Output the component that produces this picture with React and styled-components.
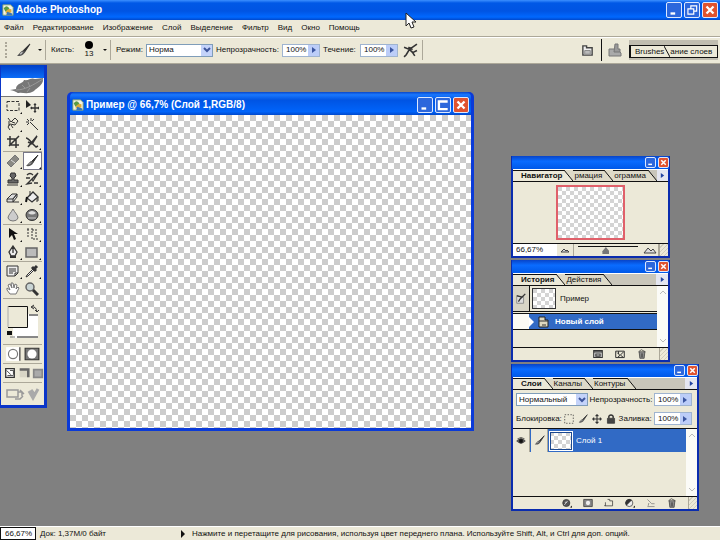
import React from "react";
import styled, { createGlobalStyle } from "styled-components";

const Icon = ({ size = 14, children }) => (
  <Svg viewBox="0 0 14 14" width={size} height={size} aria-hidden="true">
    {children}
  </Svg>
);

const Brush = ({ size }) => (
  <Icon size={size}>
    <path d="M13 1 L7 7 L8 8.500 Z" fill="#333" stroke="#333" />
    <path d="M7 7 C5 7 4 9 1 12 C4 12.500 7 12 8.500 8.500 Z" fill="#555" />
    <path d="M6 8.500 L4 10.500" stroke="#ccc" />
  </Icon>
);

const DocIcon = () => (
  <Icon size={12}>
    <path d="M1 1 H10 L13 4 V13 H1 Z" fill="#f4f4e4" stroke="#7a9a68" />
    <path d="M2 5 Q6 0 9 6 L4 9 Z" fill="#5b9b44" />
    <path d="M4 11 Q5 5 11 6 L11 10 Z" fill="#e0ac35" />
    <path d="M6 9 L12 11 V13 H5 Z" fill="#3a76b8" />
  </Icon>
);

const icons = {
  marquee: <path d="M1 2.500 H13 V11.500 H1 Z" strokeDasharray="3 1.500" />,
  move: (
    <>
      <path d="M1 1 V9 L6 6 Z" fill="#222" stroke="none" />
      <path d="M10 5 V13 M6 9 H14 M9 6 L10 5 L11 6 M9 12 L10 13 L11 12 M7 8 L6 9 L7 10 M13 8 L14 9 L13 10" strokeWidth="1.300" />
    </>
  ),
  lasso: <path d="M2 1 L5 5 L9 1 L12 4 L9 8 L4 7 L2 10 L4 13 M3 4 V9 M6 5 L9 6 M5 8 L7 11" />,
  wand: <path d="M5 5 L13 13 M6 1 V4 M1 5 H4 M2 2 L4 4 M9 2 L7 4 M2 8 L4 6" />,
  crop: <path d="M4 1 V10 H13 M1 4 H10 V13 M3 11 L13 1" strokeWidth="1.500" />,
  slice: <path d="M1 3 C4 3 6 8 11 12 L13 11 M3 12 L12 1 L7 9 M3 7 L7 9" strokeWidth="1.500" />,
  heal: (
    <>
      <path d="M1 9 L9 1 L13 5 L5 13 Z" fill="#8a8a84" stroke="#777" />
      <path d="M5 6 L9 9" stroke="#ddd" />
    </>
  ),
  stamp: (
    <>
      <path d="M5 1 H9 L10 4 L8 6 V8 H12 V11 H2 V8 H6 V6 L4 4 Z" fill="#666" />
      <path d="M1 13 H12" />
    </>
  ),
  history: <path d="M13 1 L7 7 L8 9 Z M7 7 L2 12 L7 11 M2 3 Q5 0 8 3 M1 6 H5 M9 11 H13" strokeWidth="1.300" />,
  eraser: (
    <>
      <path d="M1 9 L6 4 H11 L7 9 V12 H1 Z M1 9 H7 L11 4 V7 L7 12" fill="#ddd" />
      <path d="M7 12 H13" />
    </>
  ),
  bucket: (
    <>
      <path d="M2 8 L8 2 L13 7 L7 12 Z" fill="#eee" strokeWidth="1.300" />
      <path d="M5 1 V6 M13 7 V11 M12 8 V12" />
      <path d="M2 7 L1 12" stroke="#111" strokeWidth="2" />
    </>
  ),
  blur: <path d="M7 1 C5 5 2 7 2 10 Q3 13 7 13 Q11 13 12 10 C12 7 9 5 7 1 Z" fill="#ccc" stroke="#777" />,
  sponge: (
    <>
      <ellipse cx="7" cy="7" rx="6" ry="5.500" fill="#777" />
      <path d="M3 5 Q7 1 11 5 Q7 8 3 5 Z" fill="#ddd" stroke="none" />
      <path d="M3 10 H11" stroke="#ccc" />
    </>
  ),
  select: <path d="M3 1 V11 L6 8 L8 13 L10 12 L8 7 H12 Z" fill="#111" stroke="none" />,
  type: <path d="M2 2 H5 M3 2 V10 M7 1 V12 M7 3 H12 M11 5 V11 M8 12 H13" strokeDasharray="2 1" />,
  pen: (
    <>
      <path d="M7 1 L11 7 L9 11 H5 L3 7 Z M7 1 V8" fill="#eee" strokeWidth="1.300" />
      <path d="M4 12 H10" strokeWidth="2" />
    </>
  ),
  shape: <path d="M1 3 H12 V12 H1 Z" fill="#bbb" stroke="#666" strokeWidth="1.500" />,
  note: <path d="M1 2 H12 V9 L9 12 H1 Z M3 5 H10 M3 7 H10 M3 9 H7 M9 12 V9 H12" fill="#eee" />,
  dropper: (
    <>
      <path d="M8 5 L2 11 L1 13 L3 12 L9 6" fill="#eee" />
      <path d="M7 3 L11 7 M9 5 L12 2" strokeWidth="3" />
    </>
  ),
  hand: (
    <path d="M4 12 L1 8 V6 L4 8 L2 3 L4 2 L6 6 L5 1 H7 L8 6 L9 2 L11 3 L10 7 L12 5 L13 6 L10 12 Z" fill="#fff" stroke="#777" />
  ),
  zoom: (
    <>
      <circle cx="5" cy="5" r="4" fill="#c9d4d4" stroke="#666" strokeWidth="1.500" />
      <path d="M8 8 L13 13" strokeWidth="3" />
    </>
  ),
  lockDots: <path d="M1 1 H13 V13 H1 Z" strokeDasharray="2 2" />,
  lock: (
    <>
      <path d="M2 6 H12 V13 H2 Z" fill="#444" />
      <path d="M4 6 V3 Q7 0 10 3 V6" strokeWidth="2" />
    </>
  ),
  cross: <path d="M7 1 V13 M1 7 H13 M5 3 L7 1 L9 3 M5 11 L7 13 L9 11 M3 5 L1 7 L3 9 M11 5 L13 7 L11 9" strokeWidth="1.500" />,
  eye: (
    <>
      <path d="M1 7 Q7 1 13 7 Q7 13 1 7 Z" fill="#777" />
      <circle cx="7" cy="7" r="3" fill="#111" />
      <path d="M2 4 Q7 0 12 4" />
    </>
  ),
  file: (
    <>
      <path d="M2 2 H6 V4 H12 V12 H2 Z" fill="#eee" stroke="#444" strokeWidth="1.500" />
      <path d="M4 7 H10 V11 H4 Z" fill="#bbb" stroke="#888" />
    </>
  ),
  tray: (
    <>
      <path d="M1 6 H9 L13 10 V13 H1 Z" fill="#aaa" stroke="#777" />
      <path d="M7 1 H10 V6 H12 V9 H6 Z" fill="#999" stroke="#777" />
    </>
  ),
  airbrush: <path d="M13 1 L6 6 L1 4 M6 6 L9 9 L13 7 M9 9 L11 12 M6 6 L3 11 L1 13 M5 4 L9 6" strokeWidth="1.500" />,
  snapshot: (
    <>
      <path d="M1 2 H13 V12 H1 Z" fill="#ddd" strokeWidth="1.500" />
      <path d="M1 4 H13 M4 7 H10 V10 H4 Z" strokeWidth="1.500" />
    </>
  ),
  newDoc: <path d="M1 3 H13 V12 H1 Z M3 5 L7 9 L12 4 M7 9 L4 11 M8 9 L11 11 M5 3 V7" strokeWidth="1.400" />,
  trash: (
    <>
      <path d="M3 4 H11 L10 13 H4 Z" fill="#999" />
      <path d="M2 4 L6 1 L12 4 M6 6 V12 M8 6 V12" />
    </>
  ),
  fx: (
    <>
      <circle cx="6" cy="7" r="5" fill="#555" />
      <path d="M3 10 L8 4 M4 6 H7" stroke="#eee" />
      <path d="M12 13 H14 V11 Z" fill="#111" />
    </>
  ),
  mask: (
    <>
      <path d="M1 2 H13 V12 H1 Z" fill="#888" />
      <circle cx="7" cy="7" r="3" fill="#eee" stroke="none" />
    </>
  ),
  folder: <path d="M1 10 V11 H12 V4 H8 V2 H5 M2 11 V6" />,
  adjust: (
    <>
      <circle cx="6" cy="7" r="5" fill="#eee" />
      <path d="M9 3 A5 5 0 0 0 2 10 Z" fill="#333" />
      <path d="M12 13 H14 V11 Z" fill="#111" />
    </>
  ),
  page: <path d="M2 2 L8 8 M2 12 H12 M8 8 H12 M4 7 L3 11" stroke="#777" />,
  step: (
    <>
      <path d="M2 4 H10 V12 H2 Z" fill="#ddd" stroke="#888" />
      <path d="M12 1 L6 7 L4 10 M2 3 L9 5" strokeWidth="1.500" />
    </>
  ),
  maskOff: (
    <>
      <path d="M1 1 H13 V13 H1 Z" fill="#fff" stroke="none" />
      <circle cx="7" cy="7" r="4" fill="#fff" stroke="#777" />
      <path d="M13 1 V13" />
    </>
  ),
  maskOn: (
    <>
      <path d="M1 2 H13 V12 H1 Z" fill="#777" />
      <circle cx="7" cy="7" r="4" fill="#fff" stroke="none" />
    </>
  ),
  screen: (
    <>
      <path d="M2 2 H12 V12 H2 Z" fill="#fff" strokeWidth="1.500" />
      <path d="M3 4 L8 9 M4 10 H11 M7 4 H11 V9" />
    </>
  ),
  screenMenu: (
    <>
      <path d="M2 2 H12 V12 H2 Z" fill="#d8d5c6" stroke="none" />
      <path d="M2 3 H12 V12" stroke="#666" strokeWidth="3" />
    </>
  ),
  screenFull: <path d="M2 3 H12 V12 H2 Z" fill="#aaa" stroke="#888" strokeWidth="2" />,
};

const Glyph = ({ name, size }) =>
  name === "brush" ? (
    <Brush size={size} />
  ) : (
    <Icon size={size}>
      <g fill="none" stroke="#333">
        {icons[name]}
      </g>
    </Icon>
  );

const menus = [
  "Файл",
  "Редактирование",
  "Изображение",
  "Слой",
  "Выделение",
  "Фильтр",
  "Вид",
  "Окно",
  "Помощь",
];

const tools = [
  ["marquee", "move", "lasso", "wand", "crop", "slice"],
  ["heal", "brush", "stamp", "history", "eraser", "bucket", "blur", "sponge"],
  ["select", "type", "pen", "shape"],
  ["note", "dropper", "hand", "zoom"],
];

// tools without a flyout menu
const single = ["move", "wand", "crop", "hand", "zoom"];

const WindowButtons = ({ restore, small }) => (
  <Buttons>
    {!small && (
      <WinButton aria-label="Свернуть">
        <svg viewBox="0 0 12 12"><path d="M3 9 H7" stroke="#fff" strokeWidth="2" /></svg>
      </WinButton>
    )}
    <WinButton aria-label="Развернуть" $small={small}>
      <svg viewBox="0 0 12 12">
        {small ? (
          <path d="M3 8.500 H8" stroke="#fff" strokeWidth="2" />
        ) : restore ? (
          <path d="M5 5 V2.500 H10 V7 H8 M2.500 5 H7.500 V9.500 H2.500 Z" stroke="#fff" fill="none" />
        ) : (
          <path d="M10 9.500 H2.500 V3 H10" stroke="#fff" strokeWidth="2" fill="none" />
        )}
      </svg>
    </WinButton>
    <WinButton aria-label="Закрыть" $close $small={small}>
      <svg viewBox="0 0 12 12"><path d="M3 3 L9 9 M9 3 L3 9" stroke="#fff" strokeWidth="2" /></svg>
    </WinButton>
  </Buttons>
);

const Percent = ({ id }) => (
  <Field>
    <NumberInput id={id} defaultValue="100%" />
    <ArrowButton aria-label="Ползунок">
      <svg viewBox="0 0 6 6" width="6" height="6"><path d="M1 0 L5 3 L1 6 Z" fill="#3b55a0" /></svg>
    </ArrowButton>
  </Field>
);

const Dropdown = ({ id, label, value, width }) => (
  <SelectWrap $width={width}>
    <Select id={id} aria-label={label} defaultValue={value}>
      <option>{value}</option>
    </Select>
    <Chevron>
      <svg viewBox="0 0 8 6" width="8" height="6">
        <path d="M1 1 L4 4 L7 1" stroke="#3d559c" strokeWidth="2" fill="none" />
      </svg>
    </Chevron>
  </SelectWrap>
);

const PanelTabs = ({ items }) => (
  <Tabs role="tablist">
    {items.map((item, i) => (
      <React.Fragment key={item}>
        <Tab role="tab" aria-selected={i === 0} $active={i === 0}>
          {item}
        </Tab>
        <Slope viewBox="0 0 9 11" $last={i === items.length - 1}>
          <path d="M0 0 L9 11 H0 Z" fill={i === 0 ? "#ece9d8" : "#dedac8"} />
          <path d="M0 0 L9 11" stroke="#111" />
        </Slope>
      </React.Fragment>
    ))}
    <MenuArrow aria-label="Меню палитры">
      <svg viewBox="0 0 6 6" width="5" height="5"><path d="M1 0 L5 3 L1 6 Z" fill="#2243a0" /></svg>
    </MenuArrow>
  </Tabs>
);

const Palette = ({ tabs, width, height, children }) => (
  <Panel $width={width} $height={height}>
    <PanelTitle>
      <WindowButtons small />
    </PanelTitle>
    <PanelTabs items={tabs} />
    {children}
  </Panel>
);

const ScrollBar = () => (
  <Scroll>
    <svg viewBox="0 0 8 8" width="8" height="8"><path d="M1 5 L4 2 L7 5" stroke="#bbb" fill="none" /></svg>
    <svg viewBox="0 0 8 8" width="8" height="8"><path d="M1 3 L4 6 L7 3" stroke="#bbb" fill="none" /></svg>
  </Scroll>
);

const App = () => {
  return (
    <Page>
      <GlobalStyle />
      <TitleBar>
        <DocIcon />
        <Title>Adobe Photoshop</Title>
        <WindowButtons restore />
      </TitleBar>

      <MenuBar>
        {menus.map((menu) => (
          <MenuItem key={menu}>{menu}</MenuItem>
        ))}
      </MenuBar>

      <OptionsBar>
        <Group $width="46px">
          <Grip />
          <Brush size={15} />
          <SmallArrow />
        </Group>
        <Group $width="65px">
          <Caption>Кисть:</Caption>
          <BrushPreview>
            <BrushDot />
            13
          </BrushPreview>
          <SmallArrow />
        </Group>
        <Group $width="312px">
          <Label htmlFor="mode" $width="27px">Режим:</Label>
          <Dropdown id="mode" value="Норма" width="67px" />
          <Label htmlFor="opacity" $width="63px">Непрозрачность:</Label>
          <Percent id="opacity" />
          <Label htmlFor="flow" $width="34px">Течение:</Label>
          <Percent id="flow" />
          <Airbrush aria-label="Аэрограф">
            <Glyph name="airbrush" size={15} />
          </Airbrush>
        </Group>
        <Spacer />
        <IconSlot>
          <Glyph name="file" size={13} />
        </IconSlot>
        <IconSlot>
          <Glyph name="tray" size={14} />
        </IconSlot>
        <Well>
          <WellTabs>
            <span>Brushes</span>
            <svg viewBox="0 0 6 11" width="6" height="11"><path d="M0 0 L6 11" stroke="#111" /></svg>
            <span>ание слоев</span>
          </WellTabs>
        </Well>
      </OptionsBar>

      <Workspace>
        <Toolbox>
          <ToolTitle />
          <Banner>
            <svg viewBox="0 0 44 18" width="44" height="18">
              <path
                d="M9 12 L15 11 C15 5 22 6 23 2 C28 3 30 -1 34 1 L42 0 C43 7 36 10 33 13 C27 17 21 14 18 15 C15 15 16 13 9 12 Z"
                fill="#777"
              />
              <path d="M15 12 C24 12 32 7 42 1 M21 7 L24 10 M27 4 L29 9 M26 14 L29 10" stroke="#999" fill="none" />
            </svg>
          </Banner>
          {tools.map((group, i) => (
            <ToolGroup key={i}>
              {group.map((name) => (
                <Tool key={name} aria-label={name} $active={name === "brush"} $more={!single.includes(name)}>
                  <Glyph name={name} />
                </Tool>
              ))}
            </ToolGroup>
          ))}
          <Colors>
            <svg viewBox="0 0 40 38" width="40" height="38">
              <path d="M10 11 H35 V35 H10 Z" fill="#fff" />
              <path d="M26 12 H35 M14 34 H35" stroke="#111" />
              <path d="M5 3 H25 V24 H5 Z" fill="#ece9d8" />
              <path d="M5 3.500 H24.500 V24.500 H5" stroke="#111" fill="none" />
              <path d="M5 3 V24" stroke="#aaa" />
              <path d="M7 34 H12" stroke="#777" />
              <path d="M4 28 H9 V32 H4 Z" fill="#111" />
              <path d="M29 4 Q33 3 34 9 M32 7 L34 9 L36 7 M31 2 L28 4 L31 6" stroke="#333" fill="none" />
            </svg>
          </Colors>
          <ToolGroup>
            <Tool aria-label="Обычный режим"><Glyph name="maskOff" size={16} /></Tool>
            <Tool aria-label="Быстрая маска"><Glyph name="maskOn" size={16} /></Tool>
          </ToolGroup>
          <ToolGroup $columns={3}>
            <Tool aria-label="Окно"><Glyph name="screen" size={12} /></Tool>
            <Tool aria-label="Экран с меню"><Glyph name="screenMenu" size={12} /></Tool>
            <Tool aria-label="Полный экран"><Glyph name="screenFull" size={12} /></Tool>
          </ToolGroup>
          <Jump aria-label="ImageReady">
            <svg viewBox="0 0 34 14" width="34" height="14">
              <path d="M1 3 H12 V10 H1 Z M12 5 H16 V9 M9 12 H14 L17 9 M14 3 L18 7" stroke="#999" fill="none" strokeWidth="1.500" />
              <path d="M23 4 L27 11 L32 2 M28 7 L25 3" stroke="#aaa" fill="none" strokeWidth="3" />
            </svg>
          </Jump>
        </Toolbox>

        <DocWindow>
          <DocTitle>
            <DocIcon />
            <Title>Пример @ 66,7% (Слой 1,RGB/8)</Title>
            <WindowButtons />
          </DocTitle>
          <Canvas />
        </DocWindow>

        <Dock>
          <Palette tabs={["Навигатор", "рмация", "ограмма"]} width="159px" height="102px">
            <NavBody>
              <NavThumb />
            </NavBody>
            <NavFooter>
              <NavInput aria-label="Масштаб навигатора" defaultValue="66,67%" />
              <ZoomButton aria-label="Уменьшить">
                <svg viewBox="0 0 14 8" width="14" height="8"><path d="M3 6 L6 3 L8 5 L9 4 L11 6 Z" fill="#ddd" stroke="#444" /></svg>
              </ZoomButton>
              <Range type="range" aria-label="Увеличение" defaultValue="46" />
              <ZoomButton aria-label="Увеличить">
                <svg viewBox="0 0 14 8" width="14" height="8"><path d="M1 7 L5 2 L8 5 L10 3 L13 7 Z" fill="#ddd" stroke="#444" /></svg>
              </ZoomButton>
              <Corner />
            </NavFooter>
          </Palette>

          <Palette tabs={["История", "Действия"]} width="159px" height="102px">
            <PanelBody>
              <List>
                <Snapshot>
                  <SourceCell><Glyph name="step" size={12} /></SourceCell>
                  <Thumb />
                  <span>Пример</span>
                </Snapshot>
                <HistoryState>
                  <StateSlot />
                  <svg viewBox="0 0 22 12" width="22" height="12">
                    <path d="M0 1 L5 6 L0 11 Z" fill="#fff" />
                    <path d="M10 1 H16 V4 H19 V11 H10 Z" fill="#ddd8c0" stroke="#222" />
                    <path d="M10 5 H19 M13 9 H17" stroke="#333" />
                  </svg>
                  <span>Новый слой</span>
                </HistoryState>
              </List>
              <ScrollBar />
            </PanelBody>
            <Footer $gap="12px">
              {["snapshot", "newDoc", "trash"].map((name) => (
                <FootButton key={name} aria-label={name}><Glyph name={name} size={10} /></FootButton>
              ))}
              <Corner />
            </Footer>
          </Palette>

          <Palette tabs={["Слои", "Каналы", "Контуры"]} width="188px" height="147px">
            <LayerOptions>
              <Dropdown label="Режим наложения" value="Нормальный" width="72px" />
              <label htmlFor="layer-opacity">Непрозрачность:</label>
              <Percent id="layer-opacity" />
            </LayerOptions>
            <LayerOptions>
              <span>Блокировка:</span>
              <LockGroup>
                {["lockDots", "brush", "cross", "lock"].map((name) => (
                  <FootButton key={name} aria-label={name}><Glyph name={name} size={10} /></FootButton>
                ))}
              </LockGroup>
              <label htmlFor="layer-fill">Заливка:</label>
              <Percent id="layer-fill" />
            </LayerOptions>
            <PanelBody $line>
              <List>
                <Layer>
                  <LayerCell><Glyph name="eye" size={10} /></LayerCell>
                  <LayerCell><Brush size={11} /></LayerCell>
                  <Thumb $selected />
                  <span>Слой 1</span>
                </Layer>
              </List>
              <ScrollBar />
            </PanelBody>
            <Footer $gap="11px">
              {["fx", "mask", "folder", "adjust", "page", "trash"].map((name) => (
                <FootButton key={name} aria-label={name}><Glyph name={name} size={10} /></FootButton>
              ))}
              <Corner />
            </Footer>
          </Palette>
        </Dock>
      </Workspace>

      <StatusBar>
        <StatusInput aria-label="Масштаб" defaultValue="66,67%" />
        <DocSize>Док: 1,37M/0 байт</DocSize>
        <svg viewBox="0 0 6 8" width="6" height="8"><path d="M1 0 L5 4 L1 8 Z" fill="#111" /></svg>
        <Hint>
          Нажмите и перетащите для рисования, используя цвет переднего плана. Используйте Shift, Alt, и Ctrl для доп. опций.
        </Hint>
      </StatusBar>

      <Cursor viewBox="0 0 12 18">
        <path d="M1 1 V14 L4 11 L6 16 L9 15 L7 10 H11 Z" fill="#fff" stroke="#222" />
      </Cursor>
    </Page>
  );
};

export default App;

const GlobalStyle = createGlobalStyle`
  * {
    box-sizing: border-box;
  }

  body {
    margin: 0;
    color: #111;
    font: 8px/10px "Liberation Sans", Arial, sans-serif;
  }

  button,
  input,
  select {
    margin: 0;
    padding: 0;
    border: 0;
    border-radius: 0;
    background: none;
    color: inherit;
    font: inherit;
  }
`;

const checker = (size, color) => `
  background: repeating-conic-gradient(#fff 0 25%, ${color} 0 50%) 0 0 / ${size}px ${size}px;
`;

const Svg = styled.svg`
  display: block;
  flex: none;
`;

const Page = styled.div`
  display: flex;
  flex-direction: column;
  height: 100vh;
  overflow: hidden;
  background: #808080;
`;

const TitleBar = styled.header`
  display: flex;
  align-items: center;
  gap: 2px;
  height: 20px;
  padding: 0 2px;
  background: linear-gradient(#3c90ff 0, #0058e6 15%, #0054e3 55%, #0068ff 85%, #0048cc 100%);
`;

const Title = styled.h1`
  flex: 1;
  margin: 0;
  color: #fff;
  font-size: 10px;
  line-height: 12px;
  font-weight: bold;
  white-space: nowrap;
`;

const Buttons = styled.div`
  display: flex;
  gap: 2px;
`;

const WinButton = styled.button`
  display: flex;
  width: ${(props) => (props.$small ? "11px" : "16px")};
  height: ${(props) => (props.$small ? "11px" : "16px")};
  border: 1px solid #dce8ff;
  border-radius: 2px;
  background: ${(props) => (props.$close ? "#e0532f" : "#2c67dc")};

  svg {
    width: 100%;
    height: 100%;
  }
`;

const MenuBar = styled.nav`
  display: flex;
  align-items: center;
  gap: 9px;
  height: 16px;
  padding: 0 4px;
  background: #ece9d8;
`;

const MenuItem = styled.button`
  white-space: nowrap;
`;

const OptionsBar = styled.div`
  display: flex;
  align-items: stretch;
  height: 28px;
  border-top: 1px solid #aca899;
  border-bottom: 1px solid #aca899;
  background: #ece9d8;
  box-shadow: inset 0 1px #fff;
`;

const Group = styled.div`
  display: flex;
  align-items: center;
  gap: 3px;
  width: ${(props) => props.$width};
  margin: 3px 0;
  padding-left: 5px;
  border-right: 1px solid #aca899;
`;

const Grip = styled.div`
  width: 2px;
  height: 16px;
  margin-right: 6px;
  border-left: 2px dotted #aca899;
`;

const SmallArrow = styled.i`
  margin-left: 4px;
  border: 2px solid transparent;
  border-top-color: #111;
  border-bottom: 0;
`;

const Caption = styled.span`
  width: 28px;
`;

const Label = styled.label`
  flex: none;
  width: ${(props) => props.$width};
  white-space: nowrap;
`;

const BrushPreview = styled.div`
  display: flex;
  flex-direction: column;
  align-items: center;
  width: 14px;
`;

const BrushDot = styled.div`
  width: 8px;
  height: 8px;
  border-radius: 50%;
  background: #000;
`;

const SelectWrap = styled.div`
  position: relative;
  flex: none;
  width: ${(props) => props.$width};
  height: 13px;
`;

const Select = styled.select`
  appearance: none;
  display: block;
  width: 100%;
  height: 100%;
  padding-left: 2px;
  border: 1px solid #7f9db9;
  background: #fff;
`;

const Chevron = styled.span`
  position: absolute;
  top: 1px;
  right: 1px;
  bottom: 1px;
  display: flex;
  align-items: center;
  justify-content: center;
  width: 11px;
  background: #c4d3fa;
  pointer-events: none;
`;

const Field = styled.div`
  display: flex;
  flex: none;
  width: 38px;
  height: 13px;
  border: 1px solid #9fb4d0;
  background: #fff;
`;

const NumberInput = styled.input`
  flex: 1;
  min-width: 0;
  padding-left: 3px;
`;

const ArrowButton = styled.button`
  display: flex;
  align-items: center;
  justify-content: center;
  width: 11px;
  background: #bccdf8;
`;

const Airbrush = styled.button`
  margin-left: 2px;
`;

const Spacer = styled.div`
  flex: 1;
`;

const IconSlot = styled.div`
  display: flex;
  align-items: center;
  margin: 2px 0;
  padding: 0 7px 0 6px;

  & + & {
    border-left: 1px solid #111;
  }
`;

const Well = styled.div`
  align-self: center;
  width: 89px;
  height: 20px;
  margin-right: 2px;
  padding-top: 5px;
  background: #c0bdb0;
`;

const WellTabs = styled.div`
  display: flex;
  align-items: center;
  height: 13px;
  padding-left: 4px;
  border: 1px solid #111;
  border-left-width: 2px;
  background: #ece9d8;
  white-space: nowrap;
`;

const Workspace = styled.main`
  position: relative;
  flex: 1;
  min-height: 0;
`;

const Toolbox = styled.aside`
  position: absolute;
  top: 1px;
  left: 0;
  width: 47px;
  border: solid #0a35c8;
  border-width: 0 3px 3px 1px;
  background: #ece9d8;
`;

const ToolTitle = styled.div`
  height: 13px;
  background: linear-gradient(#0040c8, #0a6cf8);
`;

const Banner = styled.div`
  height: 19px;
  border-bottom: 1px solid #777;
  background: #fff;
`;

const ToolGroup = styled.div`
  display: grid;
  grid-template-columns: repeat(${(props) => props.$columns || 2}, 1fr);
  margin: 0 2px;
  border-bottom: 1px solid #aca899;
`;

const Tool = styled.button`
  position: relative;
  display: flex;
  align-items: center;
  justify-content: center;
  height: 18px;
  border: 1px solid ${(props) => (props.$active ? "#778" : "transparent")};
  background: ${(props) => (props.$active ? "#fff" : "none")};

  &::after {
    content: "";
    display: ${(props) => (props.$more ? "block" : "none")};
    position: absolute;
    right: 0;
    bottom: 0;
    border: 1px solid #111;
    border-top-color: transparent;
    border-left-color: transparent;
  }
`;

const Colors = styled.div`
  height: 46px;
  padding-top: 4px;
  margin: 0 2px;
  border-bottom: 1px solid #aca899;
`;

const Jump = styled.button`
  display: flex;
  align-items: center;
  justify-content: center;
  width: 100%;
  height: 22px;
`;

const DocWindow = styled.section`
  position: absolute;
  top: 28px;
  left: 67px;
  display: flex;
  flex-direction: column;
  width: 407px;
  height: 339px;
  border: 3px solid #0a3ad8;
  border-top: 0;
  border-radius: 5px 5px 0 0;
  background: #0a3ad8;
`;

const DocTitle = styled.div`
  display: flex;
  align-items: center;
  gap: 2px;
  height: 23px;
  padding: 2px 2px 0;
  border-radius: 5px 5px 0 0;
  background: linear-gradient(#0a48c8 0, #1a78ff 12%, #0054e3 35%, #0064fa 85%, #0048cc 100%);
`;

const Canvas = styled.div`
  flex: 1;
  ${checker(12, "#ccc")}
`;

const Dock = styled.aside`
  position: absolute;
  top: 92px;
  right: 21px;
  display: flex;
  flex-direction: column;
  gap: 2px;
  width: 188px;
`;

const Panel = styled.section`
  display: flex;
  flex-direction: column;
  width: ${(props) => props.$width};
  height: ${(props) => props.$height};
  border: 2px solid #0a2cae;
  border-top: 0;
  background: #ece9d8;
`;

const PanelTitle = styled.div`
  display: flex;
  align-items: center;
  justify-content: flex-end;
  flex: none;
  height: 13px;
  margin: 0 -1px;
  background: linear-gradient(#0844c8, #0a6cff 40%, #0058e8);
`;

const Tabs = styled.div`
  display: flex;
  align-items: stretch;
  flex: none;
  height: 13px;
  border-top: 1px solid #fff;
  border-bottom: 1px solid #111;
  background: #c9c6ba;
`;

const Tab = styled.button`
  padding: 0 2px 0 ${(props) => (props.$active ? "8px" : "1px")};
  border-top: 1px solid #111;
  background: ${(props) => (props.$active ? "#ece9d8" : "#dedac8")};
  font-weight: ${(props) => (props.$active ? "bold" : "normal")};
  white-space: nowrap;
`;

const Slope = styled.svg`
  flex: none;
  width: 9px;
  height: 11px;
  background: ${(props) => (props.$last ? "none" : "#dedac8")};
`;

const MenuArrow = styled.button`
  display: flex;
  align-items: center;
  justify-content: center;
  width: 12px;
  margin-left: auto;
  background: #e4e6f0;
`;

const PanelBody = styled.div`
  display: flex;
  flex: 1;
  min-height: 0;
  border-top: ${(props) => (props.$line ? "1px solid #111" : "0")};
`;

const List = styled.div`
  flex: 1;
`;

const Scroll = styled.div`
  display: flex;
  flex-direction: column;
  align-items: center;
  justify-content: space-between;
  width: 11px;
  padding: 3px 0;
  background: #fbfbf7;
`;

const NavBody = styled.div`
  display: flex;
  flex: 1;
  align-items: center;
  justify-content: center;
`;

const NavThumb = styled.div`
  width: 69px;
  height: 55px;
  border: 2px solid #e0606a;
  ${checker(8, "#d4d4d4")}
`;

const NavFooter = styled.div`
  display: flex;
  flex: none;
  height: 13px;
  border-top: 1px solid #111;
`;

const NavInput = styled.input`
  width: 44px;
  padding-left: 3px;
  background: #fff;
`;

const ZoomButton = styled.button`
  display: flex;
  align-items: center;
  justify-content: center;
  width: 17px;
  border-right: 1px solid #aca899;
`;

const Range = styled.input`
  appearance: none;
  flex: 1;
  min-width: 0;
  margin: 2px 4px;
  border-top: 1px solid #111;

  &::-webkit-slider-thumb {
    appearance: none;
    width: 7px;
    height: 7px;
    background: #777;
    clip-path: polygon(50% 0, 100% 60%, 100% 100%, 0 100%, 0 60%);
  }
`;

const Corner = styled.div`
  width: 9px;
  align-self: stretch;
  border-left: 1px solid #aca899;
  background: repeating-linear-gradient(135deg, #ece9d8 0 2px, #d0cdbc 2px 3px);
`;

const Snapshot = styled.div`
  display: flex;
  align-items: center;
  gap: 2px;
  height: 26px;
  border-bottom: 1px solid #111;
`;

const SourceCell = styled.div`
  display: flex;
  align-items: center;
  justify-content: center;
  align-self: stretch;
  width: 17px;
  border-right: 1px solid #111;
  background: #d8d5c6;
`;

const Thumb = styled.div`
  flex: none;
  width: 24px;
  height: ${(props) => (props.$selected ? "20px" : "21px")};
  margin-right: 2px;
  border: 1px solid ${(props) => (props.$selected ? "#fff" : "#333")};
  outline: ${(props) => (props.$selected ? "1px solid #1c4890" : "none")};
  outline-offset: -2px;
  ${checker(8, "#d4d4d4")}
`;

const HistoryState = styled.div`
  display: flex;
  align-items: center;
  height: 17px;
  margin-top: 1px;
  border-top: 1px solid #111;
  border-bottom: 1px solid #111;
  background: #316ac5;
  color: #fff;
  font-weight: bold;

  span {
    margin-left: 4px;
  }
`;

const StateSlot = styled.div`
  align-self: stretch;
  width: 16px;
  background: #fbfaf4;
`;

const Footer = styled.div`
  display: flex;
  align-items: center;
  justify-content: flex-end;
  gap: ${(props) => props.$gap};
  flex: none;
  height: 13px;
  border-top: 1px solid #111;
`;

const FootButton = styled.button`
  display: flex;
`;

const LayerOptions = styled.div`
  display: flex;
  align-items: center;
  justify-content: space-between;
  flex: none;
  height: 19px;
  padding: 0 5px 0 3px;
  white-space: nowrap;
`;

const LockGroup = styled.div`
  display: flex;
  gap: 4px;
`;

const Layer = styled.div`
  display: flex;
  align-items: center;
  gap: 1px;
  height: 23px;
  background: #316ac5;
  color: #fff;
`;

const LayerCell = styled.div`
  display: flex;
  align-items: center;
  justify-content: center;
  align-self: stretch;
  width: 17px;
  background: #ece9d8;
  border-right: 1px solid #aca899;
`;

const StatusBar = styled.footer`
  display: flex;
  align-items: center;
  flex: none;
  height: 14px;
  border-top: 1px solid #fff;
  background: #ece9d8;
  white-space: nowrap;
`;

const StatusInput = styled.input`
  width: 36px;
  height: 13px;
  padding-left: 4px;
  border: 1px solid #111;
  background: #fff;
`;

const DocSize = styled.div`
  width: 144px;
  padding-left: 4px;
`;

const Hint = styled.div`
  margin-left: 6px;
`;

const Cursor = styled.svg`
  position: absolute;
  top: 12px;
  left: 405px;
  width: 12px;
  height: 18px;
`;
